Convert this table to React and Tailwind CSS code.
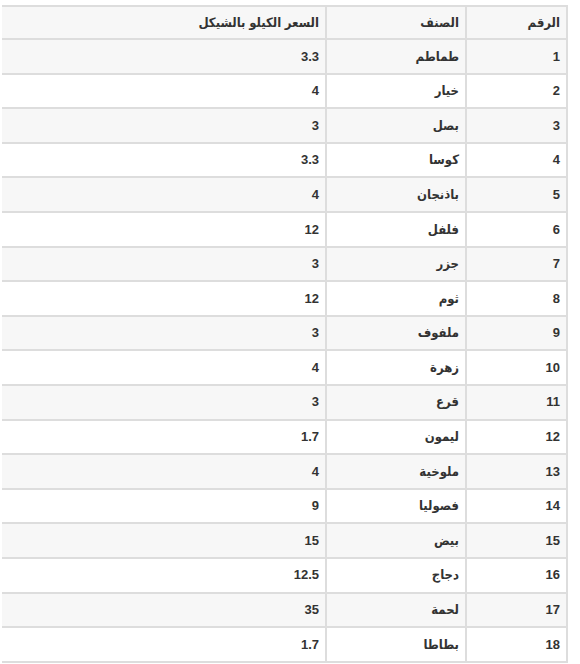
const rows = [
  [1, "طماطم", "3.3"],
  [2, "خيار", "4"],
  [3, "بصل", "3"],
  [4, "كوسا", "3.3"],
  [5, "باذنجان", "4"],
  [6, "فلفل", "12"],
  [7, "جزر", "3"],
  [8, "ثوم", "12"],
  [9, "ملفوف", "3"],
  [10, "زهرة", "4"],
  [11, "قرع", "3"],
  [12, "ليمون", "1.7"],
  [13, "ملوخية", "4"],
  [14, "فصوليا", "9"],
  [15, "بيض", "15"],
  [16, "دجاج", "12.5"],
  [17, "لحمة", "35"],
  [18, "بطاطا", "1.7"],
];

export default function App() {
  return (
    <div
      dir="rtl"
      className="w-[580px] min-h-[664px] bg-white pt-[5px] pr-[12px] pl-[2px]"
      style={{ fontFamily: '"Liberation Sans", "DejaVu Sans Condensed", "DejaVu Sans", Arial, sans-serif' }}
    >
      <table className="w-[566px] border-collapse text-[13px] font-bold text-[#333333]">
        <colgroup>
          <col className="w-[101px]" />
          <col className="w-[140px]" />
          <col />
        </colgroup>
        <thead>
          <tr className="bg-[#f7f7f7] h-[33px]">
            <th className="border-y-2 border-r-2 border-l-2 border-[#dddddd] pr-[6px] text-right font-bold">الرقم</th>
            <th className="border-y-2 border-l-2 border-[#dddddd] pr-[6px] text-right font-bold">الصنف</th>
            <th className="border-y-2 border-[#dddddd] pr-[6px] text-right font-bold">السعر الكيلو بالشيكل</th>
          </tr>
        </thead>
        <tbody>
          {rows.map(([n, name, price], i) => (
            <tr key={n} className={(i % 2 === 0 ? "bg-[#f7f7f7]" : "bg-white") + " h-[34.6px]"}>
              <td className="border-b-2 border-r-2 border-l-2 border-[#dddddd] pr-[6px] text-right">{n}</td>
              <td className="border-b-2 border-l-2 border-[#dddddd] pr-[6px] text-right">{name}</td>
              <td className="border-b-2 border-[#dddddd] pr-[6px] text-right">{price}</td>
            </tr>
          ))}
        </tbody>
      </table>
    </div>
  );
}
